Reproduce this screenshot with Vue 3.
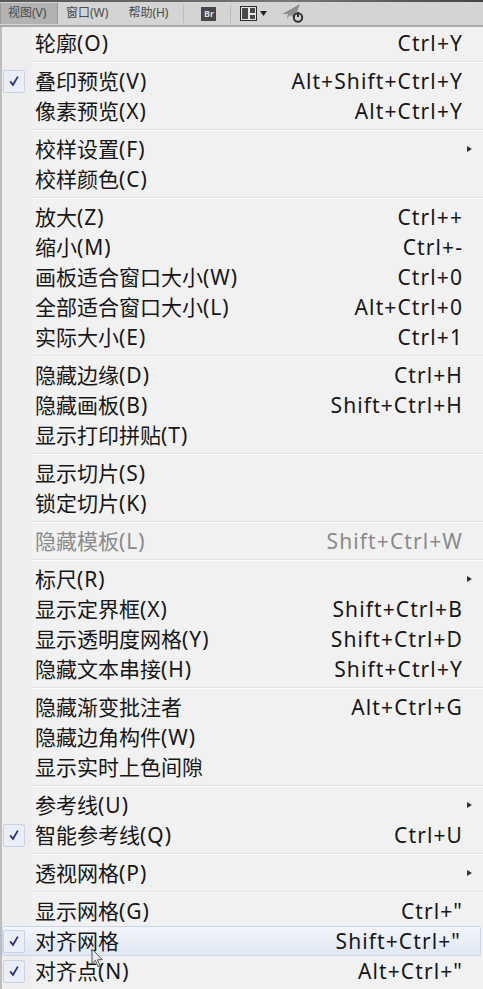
<script setup>
const raw = [
  [{ t: '轮廓(O)', k: 'Ctrl+Y' }],
  [{ t: '叠印预览(V)', k: 'Alt+Shift+Ctrl+Y', c: 1 }, { t: '像素预览(X)', k: 'Alt+Ctrl+Y' }],
  [{ t: '校样设置(F)', a: 1 }, { t: '校样颜色(C)' }],
  [{ t: '放大(Z)', k: 'Ctrl++' }, { t: '缩小(M)', k: 'Ctrl+-' }, { t: '画板适合窗口大小(W)', k: 'Ctrl+0' }, { t: '全部适合窗口大小(L)', k: 'Alt+Ctrl+0' }, { t: '实际大小(E)', k: 'Ctrl+1' }],
  [{ t: '隐藏边缘(D)', k: 'Ctrl+H' }, { t: '隐藏画板(B)', k: 'Shift+Ctrl+H' }, { t: '显示打印拼贴(T)' }],
  [{ t: '显示切片(S)' }, { t: '锁定切片(K)' }],
  [{ t: '隐藏模板(L)', k: 'Shift+Ctrl+W', d: 1 }],
  [{ t: '标尺(R)', a: 1 }, { t: '显示定界框(X)', k: 'Shift+Ctrl+B' }, { t: '显示透明度网格(Y)', k: 'Shift+Ctrl+D' }, { t: '隐藏文本串接(H)', k: 'Shift+Ctrl+Y' }],
  [{ t: '隐藏渐变批注者', k: 'Alt+Ctrl+G' }, { t: '隐藏边角构件(W)' }, { t: '显示实时上色间隙' }],
  [{ t: '参考线(U)', a: 1 }, { t: '智能参考线(Q)', k: 'Ctrl+U', c: 1 }],
  [{ t: '透视网格(P)', a: 1 }],
  [{ t: '显示网格(G)', k: 'Ctrl+"' }, { t: '对齐网格', k: 'Shift+Ctrl+"', c: 1, h: 1 }, { t: '对齐点(N)', k: 'Alt+Ctrl+"', c: 1 }]
]
const groups = raw.map((g) =>
  g.map((item) => {
    const at = item.t.indexOf('(')
    return at < 0
      ? { ...item, cn: item.t, mn: '' }
      : { ...item, cn: item.t.slice(0, at), mn: item.t.slice(at) }
  })
)
</script>

<template>
  <div class="screen">
    <div class="topline"></div>
    <header class="bar">
      <span class="tab active">视图(V)</span>
      <span class="tab">窗口(W)</span>
      <span class="tab">帮助(H)</span>
      <span class="div"></span>
      <span class="br">Br</span>
      <span class="div second"></span>
      <svg class="layout" width="27" height="15" viewBox="0 0 27 15">
        <rect x="0.5" y="0.5" width="16" height="14" fill="#e6e6e6" stroke="#2a2a2a" />
        <rect x="2" y="2" width="6" height="11" fill="#4a4a4a" />
        <rect x="10" y="2" width="5" height="5" fill="#4a4a4a" />
        <rect x="10" y="9" width="5" height="4" fill="#4a4a4a" />
        <path d="M20 5h7l-3.5 5z" fill="#222" />
      </svg>
      <svg class="rocket" width="24" height="20" viewBox="0 0 24 20">
        <path d="M0 10 L9 5 L18 0 L15 8 L11 13 L8 11 L5 15 L6 10z" fill="#8f8f8f" />
        <circle cx="16" cy="13.5" r="4.2" fill="none" stroke="#333" stroke-width="2" />
        <path d="M16 8v5" stroke="#333" stroke-width="2" />
      </svg>
    </header>
    <main class="menu">
      <section v-for="(g, i) in groups" :key="i" class="group">
        <div v-for="item in g" :key="item.t" class="row" :class="{ disabled: item.d, hover: item.h }">
          <span class="gutter">
            <span v-if="item.c" class="check">
              <svg width="12" height="12" viewBox="0 0 12 12"><path d="M2.2 6.4 L5 10 L9.8 1.6" fill="none" stroke="#2b2a86" stroke-width="1.8" /></svg>
            </span>
          </span>
          <span class="label">{{ item.cn }}<span class="mn">{{ item.mn }}</span></span>
          <span v-if="item.k" class="key">{{ item.k }}</span>
          <span v-if="item.a" class="arrow"></span>
        </div>
      </section>
      <svg class="cursor" width="13" height="20" viewBox="0 0 13 20">
        <path d="M1 1 V15.5 L4.4 12.4 L7 18.6 L9 17.8 L6.6 11.8 L11.2 11.6z" fill="#e8e8ee" stroke="#555" stroke-width="1" />
      </svg>
    </main>
  </div>
</template>

<style scoped>
.screen {
  width: 483px;
  height: 989px;
  overflow: hidden;
  background: #f0f0f0;
  font-family: "Noto Sans", "Noto Sans CJK SC", sans-serif;
  color: #161616;
}
.topline {
  height: 2px;
  background: linear-gradient(90deg, #555 0, #777 60%, #444 100%);
}
.bar {
  display: flex;
  align-items: center;
  height: 25px;
  box-sizing: border-box;
  background: #d4d4d4;
  border-bottom: 2px solid #a9a9a9;
  font-size: 12px;
  color: #4a4a4a;
}
.tab {
  height: 21px;
  line-height: 20px;
  padding: 0 8px;
  box-sizing: border-box;
  white-space: nowrap;
  margin-right: 4px;
}
.tab.active {
  background: #b2b2b2;
  border: 1px solid #9a9a9a;
  border-width: 0 1px;
  width: 58px;
  padding: 0 0 0 7px;
  margin-right: 0;
}
.div {
  width: 1px;
  height: 18px;
  background: #bbb;
  margin-left: 3px;
}
.br {
  width: 15px;
  height: 14px;
  margin-left: 17px;
  background: #474747;
  color: #ddd;
  font-size: 9px;
  line-height: 14px;
  text-align: center;
  font-weight: 700;
}
.div.second {
  margin-left: 14px;
}
.layout {
  margin-left: 9px;
}
.rocket {
  margin-left: 15px;
}
.menu {
  position: relative;
  padding-top: 1px;
  border-left: 2px solid #bdbdbd;
  background: linear-gradient(90deg, #ededed 0, #ededed 29px, #f1f1f1 30px);
  height: 962px;
  box-sizing: border-box;
}
.group {
  padding-bottom: 8px;
  position: relative;
}
.group::after {
  content: "";
  position: absolute;
  left: 30px;
  right: 0;
  bottom: 3px;
  height: 2px;
  background: #e2e2e2;
  border-bottom: 1px solid #fafafa;
  box-sizing: border-box;
}
.group:last-of-type::after {
  display: none;
}
.row {
  display: flex;
  align-items: center;
  height: 30px;
  font-size: 21px;
  line-height: 30px;
  white-space: nowrap;
  position: relative;
}
.gutter {
  width: 33px;
  flex: none;
  display: flex;
  justify-content: flex-start;
  padding-left: 1px;
  box-sizing: border-box;
}
.check {
  width: 22px;
  height: 23px;
  box-sizing: border-box;
  border: 1px solid #c9d3e6;
  border-radius: 2px;
  background: #e9eef7;
  display: flex;
  align-items: center;
  justify-content: center;
}
.label {
  flex: 1;
}
.mn {
  letter-spacing: 1px;
}
.key {
  margin-right: 20px;
  letter-spacing: 1.1px;
}
.arrow {
  width: 0;
  height: 0;
  margin-right: 11px;
  border-left: 5px solid #333;
  border-top: 3.5px solid transparent;
  border-bottom: 3.5px solid transparent;
}
.disabled {
  color: #8a8a8a;
}
.hover {
  background: linear-gradient(180deg, #f3f6fb, #dfe7f3);
  outline: 1px solid #c9d6ea;
  outline-offset: -1px;
  margin-right: 2px;
  border-radius: 2px;
}
.cursor {
  position: absolute;
  left: 89px;
  top: 921px;
}
</style>
